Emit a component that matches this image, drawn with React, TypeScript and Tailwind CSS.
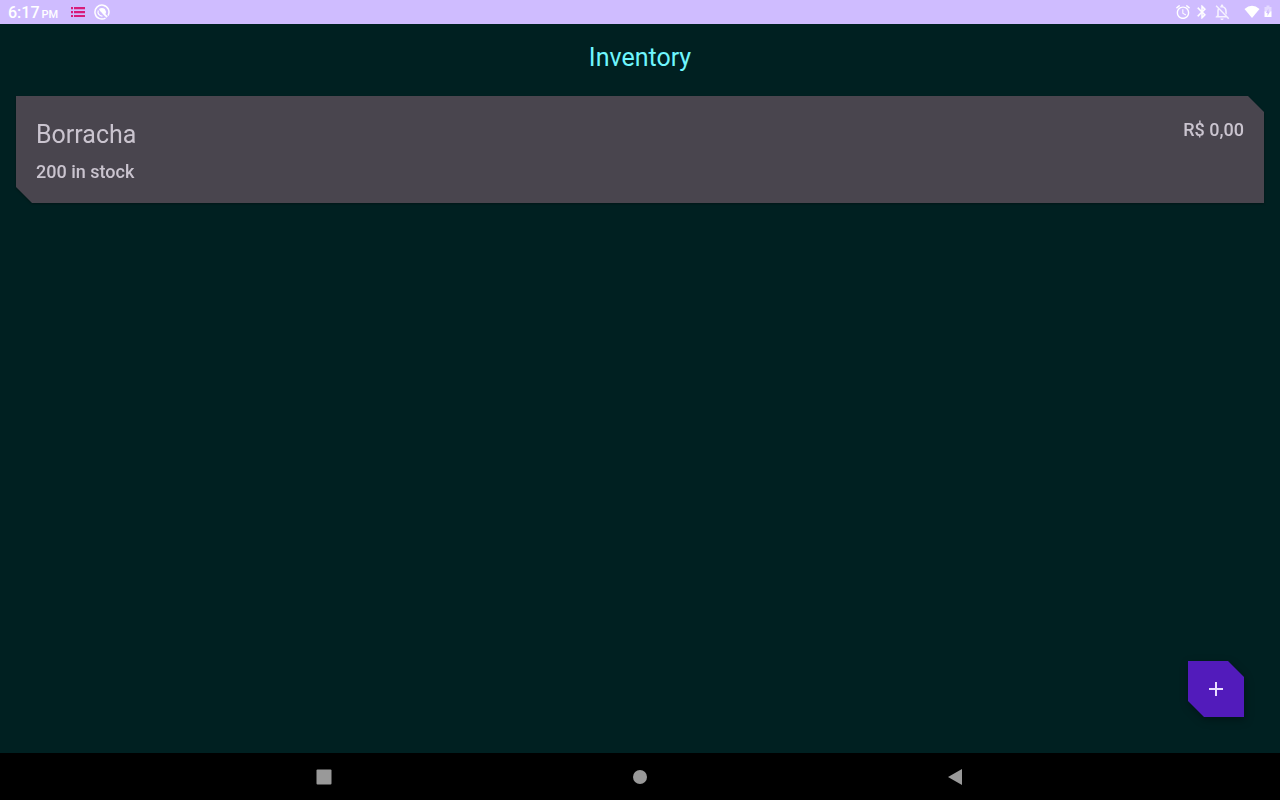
import type { ReactNode } from "react";

type Item = { name: string; stock: number; price: string };

const items: Item[] = [{ name: "Borracha", stock: 200, price: "R$ 0,00" }];

function StatusBar() {
  return (
    <header className="flex h-6 items-center justify-between bg-[#cfbcff] px-2 text-white">
      <div className="flex items-center">
        <p className="flex w-[62px] items-baseline gap-0.5 pt-1 text-base leading-6 font-medium">
          6:17 <span className="text-[11px]">PM</span>
        </p>
        <svg className="h-4 w-4" viewBox="0 0 16 16" fill="#d81b7a" aria-hidden="true">
          <path d="M1 3h2v2H1zM4 3h11v2H4zM1 7h2v2H1zM4 7h11v2H4zM1 11h2v2H1zM4 11h11v2H4z" />
          <path d="M1 5h2v.5H1zM4 5h11v.5H4zM1 9h2v.5H1zM4 9h11v.5H4z" fillOpacity="0.5" />
        </svg>
        <svg className="ml-2 h-4 w-4" viewBox="0 0 16 16" fill="none" stroke="white" aria-hidden="true">
          <path d="M11.5 14.1A7 7 0 1 1 14 11.6" strokeWidth="1.5" />
          <path d="M8.5 12A4 4 0 0 1 4.3 6.5" strokeWidth="1.2" />
          <path d="M5 5Q8 2.8 10.8 5Q12.8 7.5 11.4 10L13.8 12.4L12.6 13.8L8.8 10L7.6 8.4Q6 8 5 5Z" fill="white" stroke="none" />
        </svg>
      </div>
      <div className="flex items-center">
        <svg className="h-[14px] w-[14px]" viewBox="2 2 20 20" fill="white" aria-hidden="true">
          <path d="M22 5.72l-4.6-3.86-1.29 1.53 4.6 3.86L22 5.72zM7.88 3.39L6.6 1.86 2 5.71l1.29 1.53 4.59-3.85zM12.5 8H11v6l4.75 2.85.75-1.23-4-2.37V8zM12 4c-4.97 0-9 4.03-9 9s4.02 9 9 9c4.97 0 9-4.03 9-9s-4.03-9-9-9zm0 16c-3.87 0-7-3.13-7-7s3.13-7 7-7 7 3.13 7 7-3.13 7-7 7z" />
        </svg>
        <svg className="ml-1 h-4 w-4" viewBox="0 0 24 24" fill="white" stroke="white" strokeWidth="0.5" aria-hidden="true">
          <path d="M17.71 7.71L12 2h-1v7.59L6.41 5 5 6.41 10.59 12 5 17.59 6.41 19 11 14.41V22h1l5.71-5.71-4.3-4.29 4.3-4.29zM13 5.83l1.88 1.88L13 9.59V5.83zm1.88 10.46L13 18.17v-3.76l1.88 1.88z" />
        </svg>
        <svg className="ml-1 h-4 w-4" viewBox="2 2 20 20" fill="white" fillOpacity="0.8" aria-hidden="true">
          <path d="M20 18.69L7.84 6.14 5.27 3.49 4 4.76l2.8 2.8v.01c-.52.99-.8 2.16-.8 3.42v5l-2 2v1h13.73l2 2L21 19.72l-1-1.03zM8 17v-6c0-.7.1-1.35.31-1.93L15.96 17H8zM12 22c1.11 0 2-.89 2-2h-4c0 1.11.89 2 2 2zM16 11v2.5l2 2V11c0-3.07-1.64-5.64-4.5-6.32V4c0-.83-.67-1.5-1.5-1.5s-1.5.67-1.5 1.5v.68c-.5.12-.96.3-1.38.53l1.5 1.5C10.7 6.57 11.33 6.5 12 6.5c2.49 0 4 2.02 4 4.5z" />
        </svg>
        <svg className="ml-3.5 h-4 w-4" viewBox="0 0 16 16" fill="white" aria-hidden="true">
          <path d="M8 14L0.5 5Q8 -1.5 15.5 5Z" />
        </svg>
        <svg className="ml-1 h-4 w-2" viewBox="0 0 8 16" aria-hidden="true">
          <path d="M0.5 3H2.5V1.5h3V3h2v5h-7z" fill="white" fillOpacity="0.45" />
          <path d="M0.5 7.5H7.5V13h-7z" fill="white" />
          <path d="M4.5 4.5L2 9h1.5v3L6 7.5H4.5z" fill="#cfbcff" />
        </svg>
      </div>
    </header>
  );
}

function ItemCard({ name, stock, price }: Item) {
  return (
    <li className="drop-shadow-[0_1px_1px_rgba(0,0,0,0.3)]">
      <article className="flex items-start justify-between bg-[#49454e] p-5 text-[#cac4cf] [clip-path:polygon(0_0,calc(100%-16px)_0,100%_16px,100%_100%,16px_100%,0_calc(100%-16px))]">
        <div>
          <h2 className="text-[25px] leading-[38px]">{name}</h2>
          <p className="mt-[7px] text-lg leading-[22px] font-medium">{stock} in stock</p>
        </div>
        <p className="pt-[3px] text-lg leading-[22px] font-medium">{price}</p>
      </article>
    </li>
  );
}

function NavButton({ label, children }: { label: string; children: ReactNode }) {
  return (
    <button type="button" aria-label={label} className="flex items-center justify-center">
      <svg className="h-4 w-4" viewBox="0 0 16 16" fill="#999999" aria-hidden="true">
        {children}
      </svg>
    </button>
  );
}

export default function App() {
  return (
    <div className="flex min-h-screen flex-col bg-[#002021] font-['Roboto',sans-serif]">
      <StatusBar />
      <main className="flex flex-1 flex-col px-4">
        <h1 className="py-4 text-center text-[25px] leading-9 text-[#6ff6fe]">Inventory</h1>
        <ul className="mt-1 flex flex-col gap-4">
          {items.map((item) => (
            <ItemCard key={item.name} {...item} />
          ))}
        </ul>
        <div className="mt-auto flex justify-end pr-5 pb-9">
          <div className="drop-shadow-[1px_3px_4px_rgba(0,0,0,0.3)]">
            <button
              type="button"
              aria-label="Add item"
              className="flex h-14 w-14 items-center justify-center bg-[#521bbb] [clip-path:polygon(0_0,calc(100%-16px)_0,100%_16px,100%_100%,16px_100%,0_calc(100%-16px))]"
            >
              <svg className="h-6 w-6" viewBox="0 0 24 24" fill="#e9ddff" aria-hidden="true">
                <path d="M19 13h-6v6h-2v-6H5v-2h6V5h2v6h6v2z" />
              </svg>
            </button>
          </div>
        </div>
      </main>
      <nav aria-label="System" className="flex h-[47px] justify-center bg-black">
        <div className="grid w-full max-w-[948px] grid-cols-3">
          <NavButton label="Recent apps">
            <rect x="0.5" y="0.5" width="15" height="15" rx="1" />
          </NavButton>
          <NavButton label="Home">
            <circle cx="8" cy="8" r="7" />
          </NavButton>
          <NavButton label="Back">
            <path d="M0 8L14 0V16Z" />
          </NavButton>
        </div>
      </nav>
    </div>
  );
}
